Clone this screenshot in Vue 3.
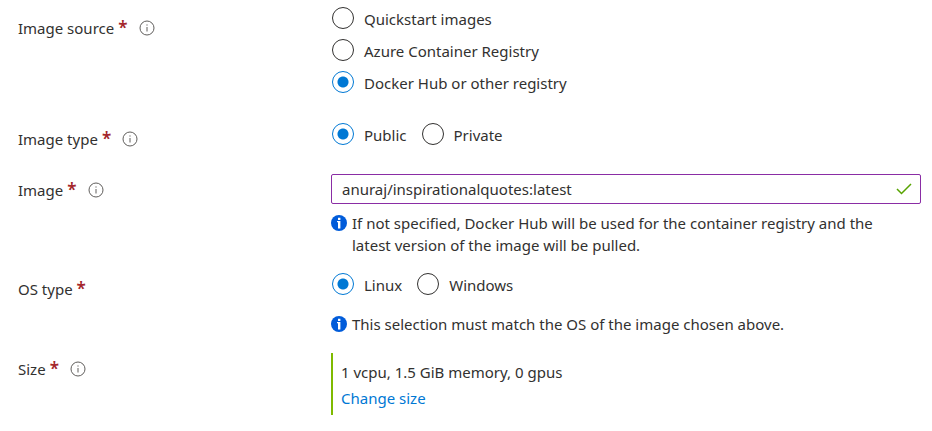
<script setup>
import { ref } from 'vue'

const source = ref('docker')
const visibility = ref('public')
const image = ref('anuraj/inspirationalquotes:latest')
const os = ref('linux')

const sources = [
  { value: 'quickstart', text: 'Quickstart images' },
  { value: 'acr', text: 'Azure Container Registry' },
  { value: 'docker', text: 'Docker Hub or other registry' }
]
const visibilities = [
  { value: 'public', text: 'Public' },
  { value: 'private', text: 'Private' }
]
const systems = [
  { value: 'linux', text: 'Linux' },
  { value: 'windows', text: 'Windows' }
]
</script>

<template>
  <form class="form" @submit.prevent>
    <div class="row">
      <div id="source-label" class="label tall">
        <span>Image source</span><span class="req">*</span>
        <svg class="info" viewBox="0 0 16 16" aria-hidden="true"><circle cx="8" cy="8" r="7" /><path d="M8 7v4.5M8 4.4v1.2" /></svg>
      </div>
      <div class="options stacked" role="radiogroup" aria-labelledby="source-label">
        <label v-for="o in sources" :key="o.value" class="option">
          <input v-model="source" type="radio" name="source" :value="o.value" /><span class="text">{{ o.text }}</span>
        </label>
      </div>
    </div>

    <div class="row type-row">
      <div id="type-label" class="label">
        <span>Image type</span><span class="req">*</span>
        <svg class="info" viewBox="0 0 16 16" aria-hidden="true"><circle cx="8" cy="8" r="7" /><path d="M8 7v4.5M8 4.4v1.2" /></svg>
      </div>
      <div class="options" role="radiogroup" aria-labelledby="type-label">
        <label v-for="o in visibilities" :key="o.value" class="option">
          <input v-model="visibility" type="radio" name="visibility" :value="o.value" /><span class="text">{{ o.text }}</span>
        </label>
      </div>
    </div>

    <div class="row image-row">
      <div class="label">
        <label for="image">Image</label><span class="req">*</span>
        <svg class="info" viewBox="0 0 16 16" aria-hidden="true"><circle cx="8" cy="8" r="7" /><path d="M8 7v4.5M8 4.4v1.2" /></svg>
      </div>
      <div>
        <div class="field">
          <input id="image" v-model="image" type="text" spellcheck="false" />
          <svg class="check" viewBox="0 0 16 12" aria-hidden="true"><path d="M1 6l4.500 4.500L15 1" /></svg>
        </div>
        <p class="hint">
          <svg class="badge" viewBox="0 0 16 16" aria-hidden="true"><circle cx="8" cy="8" r="8" /><path d="M6 6h3.400v7.400H7V7.200H6zM7 2.800h2.400v2.200H7z" /></svg>
          <span>If not specified, Docker Hub will be used for the container registry and the latest version of the image will be pulled.</span>
        </p>
      </div>
    </div>

    <div class="row os-row">
      <div id="os-label" class="label"><span>OS type</span><span class="req">*</span></div>
      <div>
        <div class="options" role="radiogroup" aria-labelledby="os-label">
          <label v-for="o in systems" :key="o.value" class="option">
            <input v-model="os" type="radio" name="os" :value="o.value" /><span class="text">{{ o.text }}</span>
          </label>
        </div>
        <p class="hint os-hint">
          <svg class="badge" viewBox="0 0 16 16" aria-hidden="true"><circle cx="8" cy="8" r="8" /><path d="M6 6h3.400v7.400H7V7.200H6zM7 2.800h2.400v2.200H7z" /></svg>
          <span>This selection must match the OS of the image chosen above.</span>
        </p>
      </div>
    </div>

    <div class="row size-row">
      <div class="label">
        <span>Size</span><span class="req">*</span>
        <svg class="info" viewBox="0 0 16 16" aria-hidden="true"><circle cx="8" cy="8" r="7" /><path d="M8 7v4.5M8 4.4v1.2" /></svg>
      </div>
      <div class="size">
        <span>1 vcpu, 1.5 GiB memory, 0 gpus</span>
        <a href="#">Change size</a>
      </div>
    </div>
  </form>
</template>

<style>
body {
  background: #fff;
}
</style>

<style scoped>
.form {
  padding: 7px 11px 16px 18px;
  color: #323130;
  font-family: "Segoe UI", "Noto Sans", "Open Sans", sans-serif;
  font-size: 15px;
  line-height: 22px;
}
.row {
  display: grid;
  grid-template-columns: 313px minmax(0, 1fr);
  align-items: start;
  margin-bottom: 30px;
}
.label {
  display: flex;
  align-items: center;
  padding-top: 5px;
}
.tall {
  padding-top: 10px;
}
.req {
  height: 22px;
  margin-left: 4px;
  color: #a4262c;
  font-size: 17px;
  font-weight: 600;
}
.info {
  width: 16px;
  height: 16px;
  margin-left: 11px;
  fill: none;
  stroke: #605e5c;
  stroke-width: 1;
}
.options {
  display: flex;
  gap: 14px;
}
.stacked {
  flex-direction: column;
  align-items: flex-start;
  gap: 10px;
}
.option {
  display: flex;
  align-items: center;
  gap: 10px;
  height: 22px;
}
.text {
  padding-top: 2px;
}
.option input {
  appearance: none;
  box-sizing: border-box;
  flex: none;
  width: 22px;
  height: 22px;
  margin: 0 0 0 1px;
  border: 1px solid #323130;
  border-radius: 50%;
  background: #fff;
}
.option input:checked {
  border-color: #0078d4;
  background: radial-gradient(circle, #0078d4 5px, #fff 6px);
}
.type-row {
  margin-bottom: 24px;
}
.image-row {
  margin-bottom: 17px;
}
.field {
  display: flex;
  align-items: center;
  box-sizing: border-box;
  height: 30px;
  padding: 0 8px 0 10px;
  border: 1px solid #8a2da5;
  border-radius: 2px;
}
.field input {
  flex: 1;
  min-width: 0;
  padding: 0;
  border: 0;
  outline: 0;
  background: none;
  color: inherit;
  font: inherit;
}
.check {
  width: 16px;
  height: 12px;
  fill: none;
  stroke: #57a300;
  stroke-width: 1.5;
}
.hint {
  display: flex;
  align-items: flex-start;
  gap: 5px;
  margin: 8px 20px 0 0;
}
.badge {
  flex: none;
  width: 16px;
  height: 16px;
  margin-top: 3px;
  fill: #015cda;
}
.badge path {
  fill: #fff;
}
.os-row {
  margin-bottom: 18px;
}
.os-hint {
  margin-top: 18px;
}
.size-row {
  margin-bottom: 0;
}
.size {
  display: flex;
  flex-direction: column;
  align-items: flex-start;
  gap: 4px;
  padding: 8px 0 6px 8px;
  border-left: 2px solid #7fba00;
}
a {
  color: #0078d4;
  text-decoration: none;
}
</style>
